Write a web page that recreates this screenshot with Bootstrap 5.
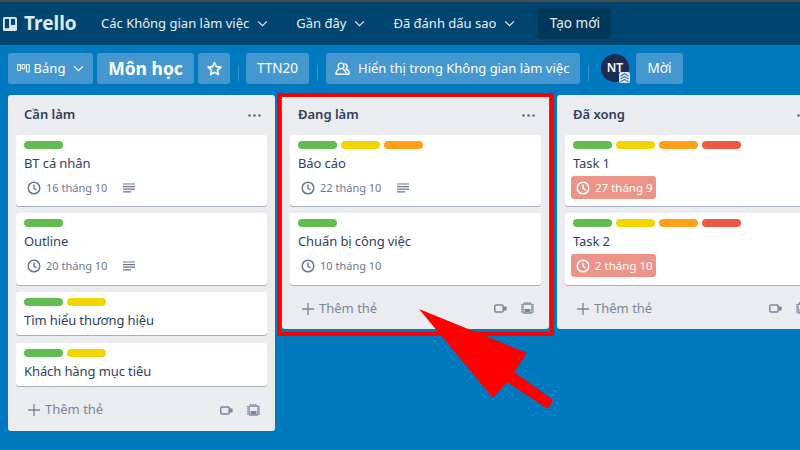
<!DOCTYPE html>
<html lang="vi">
<head>
  <meta charset="UTF-8" />
  <meta name="viewport" content="width=device-width, initial-scale=1.0" />
  <title>Trello - Môn học</title>
  <link href="https://cdn.jsdelivr.net/npm/bootstrap@5.3.0/dist/css/bootstrap.min.css" rel="stylesheet">
  <style>
    html, body { height: 100%; }
    body {
      font-family: "Noto Sans", "Open Sans", sans-serif;
      background-color: #0079bf;
      overflow: hidden;
      position: relative;
      color: #172b4d;
    }
    .top-strip { height: 2px; background-color: #4b4b4b; }
    .app-bar { height: 43px; background-color: #00456f; color: #fff; padding-left: 3px; }
    .brand { width: 98px; font-size: 19px; font-weight: 700; color: #dfe8ef; line-height: 1; }
    .menu-item { font-size: 13px; color: #e8eff4; margin-right: 28px; white-space: nowrap; }
    .menu-item svg { margin-left: 8px; }
    .create-btn {
      height: 31px; width: 73px; margin-left: -5px; background-color: #00385a; border-radius: 3px;
      font-size: 13.5px; color: #e8eff4;
    }
    .board-bar { height: 50px; padding: 8px 0 0 8px; }
    .bar-btn {
      height: 31px; background-color: #4497cf; border-radius: 3px; color: #fff;
      font-size: 13px; white-space: nowrap; flex: none;
    }
    .bar-title { font-size: 17.5px; font-weight: 700; }
    .bar-sep { width: 1px; height: 16px; background-color: #3a95cc; margin: 0 8px; flex: none; }
    .avatar {
      width: 28px; height: 28px; border-radius: 50%; background-color: #1c2d52; color: #fff;
      font-size: 12px; font-weight: 600; position: relative; flex: none;
    }
    .avatar-badge {
      position: absolute; right: -1px; bottom: -1px; width: 11px; height: 11px;
      background-color: #dfe8f5; border-radius: 2px; line-height: 0;
    }
    .lists { padding-left: 8px; gap: 7px; width: 800px; overflow: hidden; }
    .task-list { width: 267px; flex: none; background-color: #ebecf0; border-radius: 3px; }
    .task-list:nth-child(3) { margin-left: 1px; }
    .list-head { height: 40px; padding: 0 14px 0 16px; }
    .list-name { font-size: 13px; font-weight: 600; color: #2f3f5e; }
    .list-cards { padding: 0 8px; gap: 7px; }
    .task-card {
      background-color: #fff; border-radius: 3px; box-shadow: 0 1px 0 #a8b1c2;
      padding: 6px 8px 0 8px; min-height: 43px;
    }
    .task-card.has-meta { height: 71px; }
    .task-card.has-meta:nth-child(2) { height: 72px; }
    .task-card:nth-child(4) { margin-top: 1px; }
    .labels { gap: 4px; height: 8px; }
    .tag { width: 39px; height: 8px; border-radius: 4px; }
    .tag-green { background-color: #61bd4f; }
    .tag-yellow { background-color: #f2d600; }
    .tag-orange { background-color: #ff9f1a; }
    .tag-red { background-color: #eb5a46; }
    .task-title { font-size: 13px; letter-spacing: -.1px; line-height: 18px; margin-top: 5px; color: #2f3f5e; }
    .task-meta { font-size: 11px; color: #6b778c; margin-top: 6px; height: 20px; padding-left: 3px; }
    .task-meta .date-text { margin: 0 16px 0 5px; }
    .overdue {
      background-color: #ec9488; color: #fff; border-radius: 3px; height: 23px; width: 85px;
      margin: 4px 0 0 -2px; padding-left: 5px; font-size: 11.5px;
    }
    .overdue span { margin-left: 5px; white-space: nowrap; }
    .list-foot { height: 45px; padding: 3px 15px 0 20px; color: #7a869a; font-size: 13px; }
    .list-foot.short-foot { height: 44px; }
    .add-text { margin-left: 5px; }
    .mark-frame {
      position: absolute; left: 277px; top: 93px; width: 277px; height: 243px;
      border: 4px solid #fe0000; pointer-events: none;
    }
    .mark-arrow { position: absolute; left: 0; top: 0; pointer-events: none; }
  </style>
</head>
<body>

  <svg width="0" height="0" class="d-block" aria-hidden="true">
    <symbol id="ico-chev" viewBox="0 0 12 8"><path d="M1 1.5 6 6.5 11 1.5" fill="none" stroke="currentColor" stroke-width="1.3"/></symbol>
    <symbol id="ico-clock" viewBox="0 0 14 14"><circle cx="7" cy="7" r="5.8" fill="none" stroke="currentColor" stroke-width="1.5"/><path d="M7 3.5V7.3L9.6 9" fill="none" stroke="currentColor" stroke-width="1.4"/></symbol>
    <symbol id="ico-desc" viewBox="0 0 12 10"><path d="M0 1H12M0 3.6H12M0 6.2H12M0 8.8H8" fill="none" stroke="currentColor" stroke-width="1.2"/></symbol>
    <symbol id="ico-plus" viewBox="0 0 12 12"><path d="M6 0V12M0 6H12" fill="none" stroke="currentColor" stroke-width="1.3"/></symbol>
    <symbol id="ico-video" viewBox="0 0 13 9"><rect x=".8" y="1" width="8.4" height="7" rx="1.2" fill="none" stroke="currentColor" stroke-width="1.5"/><rect x="9.6" y="2.6" width="3" height="3.8" rx=".6" fill="currentColor"/></symbol>
    <symbol id="ico-tpl" viewBox="0 0 13 13"><rect x="2" y="2" width="9" height="9" rx="1" fill="none" stroke="currentColor" stroke-width="1.3"/><rect x="3.5" y="7" width="6" height="3" fill="currentColor"/><path d="M.6 2V11M12.4 2V11M3 .6H10" fill="none" stroke="currentColor" stroke-width="1" stroke-dasharray="1.4 1"/></symbol>
  </svg>

  <div class="top-strip"></div>

  <nav class="app-bar d-flex align-items-center">
    <div class="brand d-flex align-items-center">
      <svg width="14" height="14" viewBox="0 0 15 15" style="margin-right: 7px"><rect width="15" height="15" rx="2" fill="#dfe8ef"/><rect x="2" y="2" width="4.5" height="10" fill="#00456f"/><rect x="8.5" y="2" width="4.5" height="6.5" fill="#00456f"/></svg>
      <span>Trello</span>
    </div>
    <div class="menu-item d-flex align-items-center">Các Không gian làm việc<svg width="11" height="7"><use href="#ico-chev"/></svg></div>
    <div class="menu-item d-flex align-items-center">Gần đây<svg width="11" height="7"><use href="#ico-chev"/></svg></div>
    <div class="menu-item d-flex align-items-center">Đã đánh dấu sao<svg width="11" height="7"><use href="#ico-chev"/></svg></div>
    <div class="create-btn d-flex align-items-center justify-content-center">Tạo mới</div>
  </nav>

  <div class="board-bar d-flex align-items-start">
    <div class="bar-btn d-flex align-items-center justify-content-center" style="width: 85px">
      <svg width="13" height="9" viewBox="0 0 13 9" class="me-1"><path d="M.6.6H3.4V6.5H.6ZM5 .6H7.8V4.8H5ZM9.4.6H12.2V8H9.4Z" fill="none" stroke="#fff" stroke-width="1"/></svg>
      Bảng
      <svg width="11" height="7" class="ms-2"><use href="#ico-chev"/></svg>
    </div>
    <div class="bar-btn bar-title d-flex align-items-center justify-content-center ms-1" style="width: 97px">Môn học</div>
    <div class="bar-btn d-flex align-items-center justify-content-center ms-1" style="width: 32px">
      <svg width="15" height="15" viewBox="0 0 16 16"><path d="M8 1.6 10 6 14.8 6.5 11.2 9.7 12.2 14.4 8 12 3.8 14.4 4.8 9.7 1.2 6.5 6 6Z" fill="none" stroke="#fff" stroke-width="1.7" stroke-linejoin="round"/></svg>
    </div>
    <div class="bar-sep align-self-center" style="margin-top: -2px; margin-right: 7px"></div>
    <div class="bar-btn d-flex align-items-center justify-content-center" style="width: 63px; font-size: 13.5px">TTN20</div>
    <div class="bar-sep align-self-center" style="margin-top: -2px"></div>
    <div class="bar-btn d-flex align-items-center" style="width: 254px; padding-left: 9px">
      <svg width="15" height="13" viewBox="0 0 15 13" class="me-2"><circle cx="6" cy="4" r="2.9" fill="none" stroke="#fff" stroke-width="1.4"/><path d="M9.4 1.6A2.9 2.9 0 0 1 11 6.8C13 7.6 14.3 9.2 14.2 11.4 14.2 12 13.8 12.3 13.2 12.3H2C1.2 12.3.8 11.8.9 11 1.1 9.2 2.4 8 4 7.2M8 7.2C9.6 8 10.8 9.2 11 11" fill="none" stroke="#fff" stroke-width="1.4" stroke-linejoin="round"/></svg>
      Hiển thị trong Không gian làm việc
    </div>
    <div class="bar-sep align-self-center" style="margin-top: -2px"></div>
    <div class="avatar d-flex align-items-center justify-content-center" style="margin-top: 1px; margin-left: 4px">
      NT
      <span class="avatar-badge"><svg width="11" height="11" viewBox="0 0 11 11"><path d="M1.5 4.2 5.5 1.5 9.5 4.2M1.5 7 5.5 4.6 9.5 7M1.5 9.8 5.5 7.6 9.5 9.8" fill="none" stroke="#3f6fb5" stroke-width="1.1"/></svg></span>
    </div>
    <div class="bar-btn d-flex align-items-center justify-content-center" style="width: 47px; margin-left: 7px; font-size: 13.5px">Mời</div>
  </div>

  <main class="lists d-flex align-items-start">

    <section class="task-list">
      <div class="list-head d-flex align-items-center justify-content-between">
        <span class="list-name">Cần làm</span>
        <svg width="13" height="3" viewBox="0 0 13 3" fill="#5e6c84"><circle cx="1.5" cy="1.5" r="1.3"/><circle cx="6.5" cy="1.5" r="1.3"/><circle cx="11.5" cy="1.5" r="1.3"/></svg>
      </div>
      <div class="list-cards d-flex flex-column">
        <article class="task-card has-meta">
          <div class="labels d-flex"><span class="tag tag-green"></span></div>
          <div class="task-title">BT cá nhân</div>
          <div class="task-meta d-flex align-items-center"><svg width="14" height="14"><use href="#ico-clock"/></svg><span class="date-text">16 tháng 10</span><svg width="12" height="10"><use href="#ico-desc"/></svg></div>
        </article>
        <article class="task-card has-meta">
          <div class="labels d-flex"><span class="tag tag-green"></span></div>
          <div class="task-title">Outline</div>
          <div class="task-meta d-flex align-items-center"><svg width="14" height="14"><use href="#ico-clock"/></svg><span class="date-text">20 tháng 10</span><svg width="12" height="10"><use href="#ico-desc"/></svg></div>
        </article>
        <article class="task-card">
          <div class="labels d-flex"><span class="tag tag-green"></span><span class="tag tag-yellow"></span></div>
          <div class="task-title">Tìm hiểu thương hiệu</div>
        </article>
        <article class="task-card">
          <div class="labels d-flex"><span class="tag tag-green"></span><span class="tag tag-yellow"></span></div>
          <div class="task-title">Khách hàng mục tiêu</div>
        </article>
      </div>
      <div class="list-foot d-flex align-items-center">
        <svg width="12" height="12"><use href="#ico-plus"/></svg><span class="add-text">Thêm thẻ</span>
        <svg width="13" height="9" class="ms-auto"><use href="#ico-video"/></svg>
        <svg width="13" height="13" style="margin-left: 14px"><use href="#ico-tpl"/></svg>
      </div>
    </section>

    <section class="task-list">
      <div class="list-head d-flex align-items-center justify-content-between">
        <span class="list-name">Đang làm</span>
        <svg width="13" height="3" viewBox="0 0 13 3" fill="#5e6c84"><circle cx="1.5" cy="1.5" r="1.3"/><circle cx="6.5" cy="1.5" r="1.3"/><circle cx="11.5" cy="1.5" r="1.3"/></svg>
      </div>
      <div class="list-cards d-flex flex-column">
        <article class="task-card has-meta">
          <div class="labels d-flex"><span class="tag tag-green"></span><span class="tag tag-yellow"></span><span class="tag tag-orange"></span></div>
          <div class="task-title">Báo cáo</div>
          <div class="task-meta d-flex align-items-center"><svg width="14" height="14"><use href="#ico-clock"/></svg><span class="date-text">22 tháng 10</span><svg width="12" height="10"><use href="#ico-desc"/></svg></div>
        </article>
        <article class="task-card has-meta">
          <div class="labels d-flex"><span class="tag tag-green"></span></div>
          <div class="task-title">Chuẩn bị công việc</div>
          <div class="task-meta d-flex align-items-center"><svg width="14" height="14"><use href="#ico-clock"/></svg><span class="date-text">10 tháng 10</span></div>
        </article>
      </div>
      <div class="list-foot short-foot d-flex align-items-center">
        <svg width="12" height="12"><use href="#ico-plus"/></svg><span class="add-text">Thêm thẻ</span>
        <svg width="13" height="9" class="ms-auto"><use href="#ico-video"/></svg>
        <svg width="13" height="13" style="margin-left: 14px"><use href="#ico-tpl"/></svg>
      </div>
    </section>

    <section class="task-list">
      <div class="list-head d-flex align-items-center justify-content-between">
        <span class="list-name">Đã xong</span>
        <svg width="13" height="3" viewBox="0 0 13 3" fill="#5e6c84"><circle cx="1.5" cy="1.5" r="1.3"/><circle cx="6.5" cy="1.5" r="1.3"/><circle cx="11.5" cy="1.5" r="1.3"/></svg>
      </div>
      <div class="list-cards d-flex flex-column">
        <article class="task-card has-meta">
          <div class="labels d-flex"><span class="tag tag-green"></span><span class="tag tag-yellow"></span><span class="tag tag-orange"></span><span class="tag tag-red"></span></div>
          <div class="task-title">Task 1</div>
          <div class="overdue d-flex align-items-center"><svg width="14" height="14"><use href="#ico-clock"/></svg><span>27 tháng 9</span></div>
        </article>
        <article class="task-card has-meta">
          <div class="labels d-flex"><span class="tag tag-green"></span><span class="tag tag-yellow"></span><span class="tag tag-orange"></span><span class="tag tag-red"></span></div>
          <div class="task-title">Task 2</div>
          <div class="overdue d-flex align-items-center"><svg width="14" height="14"><use href="#ico-clock"/></svg><span>2 tháng 10</span></div>
        </article>
      </div>
      <div class="list-foot short-foot d-flex align-items-center">
        <svg width="12" height="12"><use href="#ico-plus"/></svg><span class="add-text">Thêm thẻ</span>
        <svg width="13" height="9" class="ms-auto"><use href="#ico-video"/></svg>
        <svg width="13" height="13" style="margin-left: 14px"><use href="#ico-tpl"/></svg>
      </div>
    </section>

  </main>

  <div class="mark-frame"></div>
  <svg class="mark-arrow" width="800" height="450" viewBox="0 0 800 450"><polygon points="419,309 527,353 514,372 553,400 548,409 507,382 493,398" fill="#fe0000"/></svg>

  <script src="https://cdn.jsdelivr.net/npm/bootstrap@5.3.0/dist/js/bootstrap.bundle.min.js"></script>
</body>
</html>
